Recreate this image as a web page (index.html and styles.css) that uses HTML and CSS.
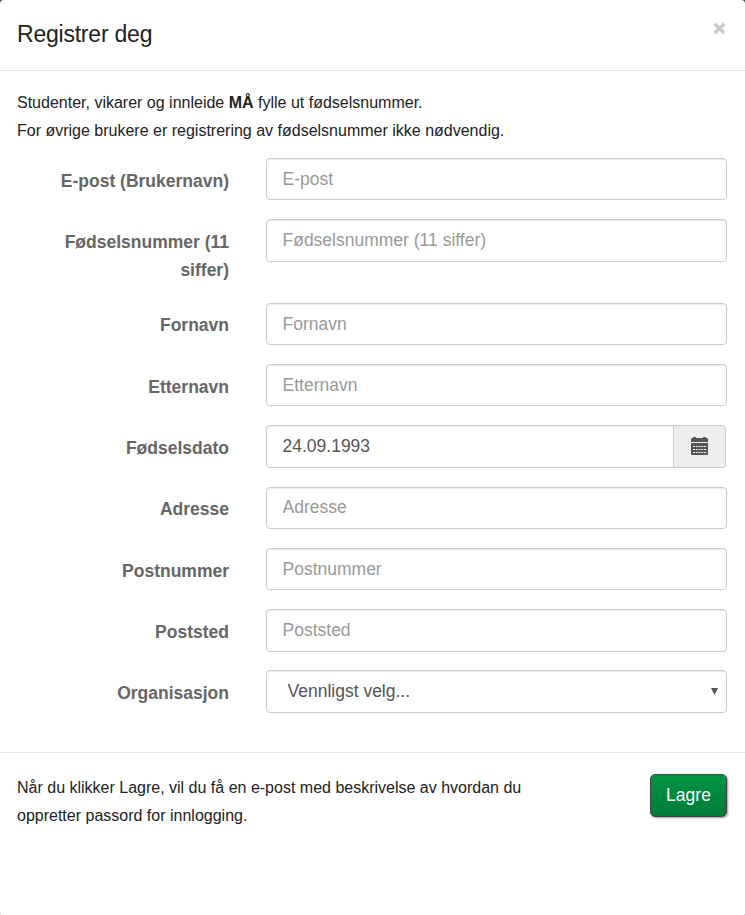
FILE: index.html
```html
<!DOCTYPE html>
<html lang="no">
<head>
    <meta charset="utf-8">
    <title>Registrer deg</title>
    <link rel="stylesheet" href="styles.css">
</head>
<body>

<div class="modal-content">
    <div class="modal-header">
        <h4 class="modal-title">Registrer deg</h4>
        <button type="button" class="close" aria-label="Lukk">
            <svg width="13" height="13" viewBox="0 0 13 13"><path d="M1.7 1.7 L11.3 11.3 M11.3 1.7 L1.7 11.3"/></svg>
        </button>
    </div>

    <form class="form-horizontal">
        <div class="modal-body">
            <p class="info">
                Studenter, vikarer og innleide <b>MÅ</b> fylle ut fødselsnummer.<br>
                For øvrige brukere er registrering av fødselsnummer ikke nødvendig.
            </p>
            <div class="form-group">
                <label class="control-label" for="email">E-post (Brukernavn)</label>
                <input class="form-control" id="email" type="text" placeholder="E-post">
            </div>
            <div class="form-group">
                <label class="control-label" for="ssn">Fødselsnummer (11 siffer)</label>
                <input class="form-control" id="ssn" type="text" placeholder="Fødselsnummer (11 siffer)">
            </div>
            <div class="form-group">
                <label class="control-label" for="firstname">Fornavn</label>
                <input class="form-control" id="firstname" type="text" placeholder="Fornavn">
            </div>
            <div class="form-group">
                <label class="control-label" for="lastname">Etternavn</label>
                <input class="form-control" id="lastname" type="text" placeholder="Etternavn">
            </div>
            <div class="form-group">
                <label class="control-label" for="birthdate">Fødselsdato</label>
                <div class="input-group">
                    <input class="form-control" id="birthdate" type="text" value="24.09.1993">
                    <span class="input-group-addon">
                        <svg class="calendar" width="17" height="18" viewBox="0 0 17 18">
                            <path d="M0 5V2.2Q0 1 1.2 1H2V0H5V1H12V0H15V1H15.8Q17 1 17 2.2V5Z"/>
                            <path d="M0 6H17V17Q17 18 16 18H1Q0 18 0 17Z"/>
                            <path class="days" d="M2 9.5H16M2 12.5H16M2 15.5H16"/>
                        </svg>
                    </span>
                </div>
            </div>
            <div class="form-group">
                <label class="control-label" for="address">Adresse</label>
                <input class="form-control" id="address" type="text" placeholder="Adresse">
            </div>
            <div class="form-group">
                <label class="control-label" for="zip">Postnummer</label>
                <input class="form-control" id="zip" type="text" placeholder="Postnummer">
            </div>
            <div class="form-group">
                <label class="control-label" for="city">Poststed</label>
                <input class="form-control" id="city" type="text" placeholder="Poststed">
            </div>
            <div class="form-group">
                <label class="control-label" for="organization">Organisasjon</label>
                <div class="select-wrap">
                    <select class="form-control" id="organization">
                        <option>Vennligst velg...</option>
                    </select>
                    <svg class="arrow" width="7" height="7" viewBox="0 0 7 7"><path d="M0 0H7L3.5 7Z"/></svg>
                </div>
            </div>
        </div>

        <div class="modal-footer">
            <p class="info">Når du klikker Lagre, vil du få en e-post med beskrivelse av hvordan du oppretter passord for innlogging.</p>
            <button type="button" class="btn">Lagre</button>
        </div>
    </form>
</div>

</body>
</html>
```

FILE: styles.css
```css
* {
    box-sizing: border-box;
}

html {
    background-color: #4a4f57;
}

body {
    margin: 0;
    font-family: "Liberation Sans", Arial, sans-serif;
    font-size: 17.5px;
    line-height: 28px;
    color: #222;
}

.modal-content {
    height: 915px;
    background-color: #fff;
    border-radius: 4px 4px 1px 1px;
}

.modal-header {
    display: flex;
    justify-content: space-between;
    align-items: flex-start;
    height: 71px;
    padding: 20px 19px 0 17px;
    border-bottom: 1px solid #e5e5e5;
}

.modal-title {
    margin: 0;
    font-size: 23px;
    font-weight: normal;
    letter-spacing: -0.22px;
}

.close {
    display: block;
    margin-top: 2px;
    padding: 0;
    border: 0;
    background: none;
    line-height: 0;
}

.close path {
    stroke: #ccc;
    stroke-width: 3.5;
}

.modal-body {
    height: 681px;
    padding: 18px 18px 0 17px;
}

.info {
    margin: 0;
    font-size: 16px;
}

.modal-body .info {
    margin-bottom: 12.9px;
}

.form-group {
    display: grid;
    grid-template-columns: 212px 461px;
    column-gap: 37px;
    align-items: start;
    margin-bottom: 18.9px;
}

.control-label {
    padding-top: 8.7px;
    font-weight: bold;
    text-align: right;
    color: #666;
}

.form-control {
    display: block;
    width: 100%;
    height: 42.4px;
    margin: 0;
    padding: 6.6px 15.5px 6.4px;
    font-family: inherit;
    font-size: 17.5px;
    line-height: 28px;
    color: #555;
    background-color: #fff;
    border: 1px solid #ccc;
    border-radius: 4px;
    box-shadow: inset 0 1px 1px rgba(0,0,0,0.075);
    appearance: none;
}

.form-control::placeholder {
    color: #999;
    opacity: 1;
}

.input-group {
    display: flex;
    width: 460px;
}

.input-group .form-control {
    flex: 1;
    border-radius: 4px 0 0 4px;
}

.input-group-addon {
    display: flex;
    align-items: center;
    justify-content: center;
    width: 52px;
    padding: 0 1px 2px 0;
    background-color: #eee;
    border: 1px solid #ccc;
    border-left: 0;
    border-radius: 0 4px 4px 0;
}

.calendar {
    fill: #555;
}

.calendar .days {
    stroke: #eee;
    stroke-width: 1;
    stroke-dasharray: 2 0.75;
}

.select-wrap {
    position: relative;
}

.select-wrap .form-control {
    padding: 5.5px 15.5px 7.5px 20.5px;
}

.arrow {
    position: absolute;
    top: 18px;
    right: 9px;
    fill: #555;
}

.modal-footer {
    display: flex;
    justify-content: space-between;
    align-items: flex-start;
    padding: 21px 18px 0 17px;
    border-top: 1px solid #e5e5e5;
}

.modal-footer .info {
    width: 530px;
}

.btn {
    width: 77px;
    height: 43px;
    padding: 0 0 1px;
    font-family: inherit;
    font-size: 17.5px;
    color: #fff;
    background: linear-gradient(#009645, #007a38);
    border: 1px solid #444;
    border-radius: 5px;
    box-shadow: 1px 1px 2px rgba(0,0,0,0.4);
}
```
